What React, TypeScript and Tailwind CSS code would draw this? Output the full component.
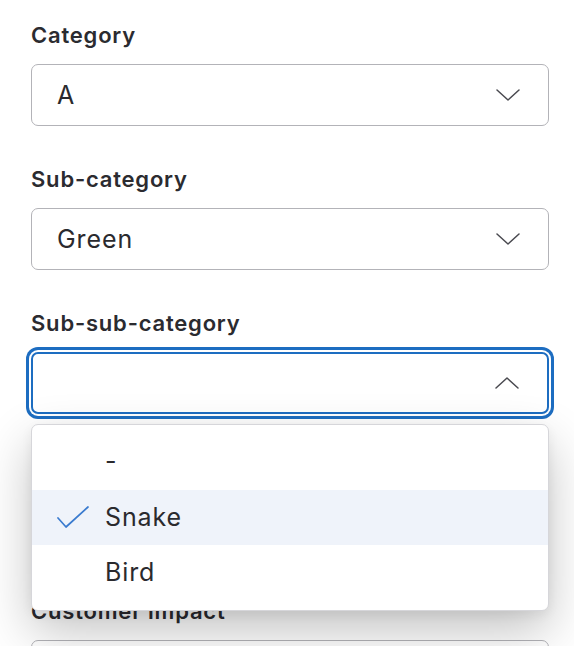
import React from "react";

const Chevron = ({ up = false }: { up?: boolean }) => (
  <svg width="24" height="14" viewBox="0 0 24 14" fill="none" className="shrink-0">
    <polyline
      points={up ? "1,12 12,2 23,12" : "1,2 12,12 23,2"}
      stroke="#4a4a50"
      strokeWidth="1.5"
      strokeLinecap="round"
      strokeLinejoin="round"
    />
  </svg>
);

const Label = ({ text }: { text: string }) => (
  <div className="h-[28px] leading-[28px] text-[22px] font-semibold text-[#2b2b30] tracking-[0.8px]">{text}</div>
);

const Field = ({ label, value }: { label: string; value: string }) => (
  <div className="flex flex-col">
    <Label text={label} />
    <div className="mt-[15px] h-[62px] rounded-[7px] border-[1.5px] border-[#b3b3b8] bg-white flex items-center justify-between pl-[25px] pr-[28px]">
      <span className="pt-[2px] text-[25px] tracking-[0.9px] text-[#2a2a2e]">{value}</span>
      <Chevron />
    </div>
  </div>
);

export default function App() {
  return (
    <div className="w-[574px] h-[646px] overflow-hidden bg-white font-['Inter','Noto_Sans',sans-serif]">
      <div className="pt-[21px] pl-[31px] pr-[25px] flex flex-col gap-[39px]">
        <Field label="Category" value="A" />
        <Field label="Sub-category" value="Green" />
        <div className="flex flex-col relative z-10 mb-[144px]">
          <Label text="Sub-sub-category" />
          <div className="mt-[15px] h-[62px] rounded-[7px] border-2 border-[#1d6dc1] bg-white flex items-center justify-end pr-[28px] shadow-[0_0_0_2px_#ffffff,0_0_0_5px_#1d6dc1]">
            <Chevron up />
          </div>
          <div className="absolute left-0 right-0 top-[115px] rounded-[7px] border border-[#d6d6da] bg-white py-[9px] shadow-[0_20px_50px_rgba(0,0,0,0.24),0_4px_12px_rgba(0,0,0,0.06)]">
            <div className="h-[56px] flex items-center pl-[73px] text-[25px] tracking-[0.9px] text-[#2a2a2e]">-</div>
            <div className="h-[55px] flex items-center bg-[#eff3fa] text-[25px] tracking-[0.9px] text-[#2a2a2e]">
              <svg width="36" height="26" viewBox="0 0 36 26" fill="none" className="ml-[24px] mr-[13px] shrink-0">
                <polyline points="2,13 10,22 32,2" stroke="#3a7bcf" strokeWidth="1.7" strokeLinecap="round" strokeLinejoin="round" />
              </svg>
              <span>Snake</span>
            </div>
            <div className="h-[56px] flex items-center pl-[73px] text-[25px] tracking-[0.9px] text-[#2a2a2e]">Bird</div>
          </div>
        </div>
        <Field label="Customer impact" value="" />
      </div>
    </div>
  );
}
